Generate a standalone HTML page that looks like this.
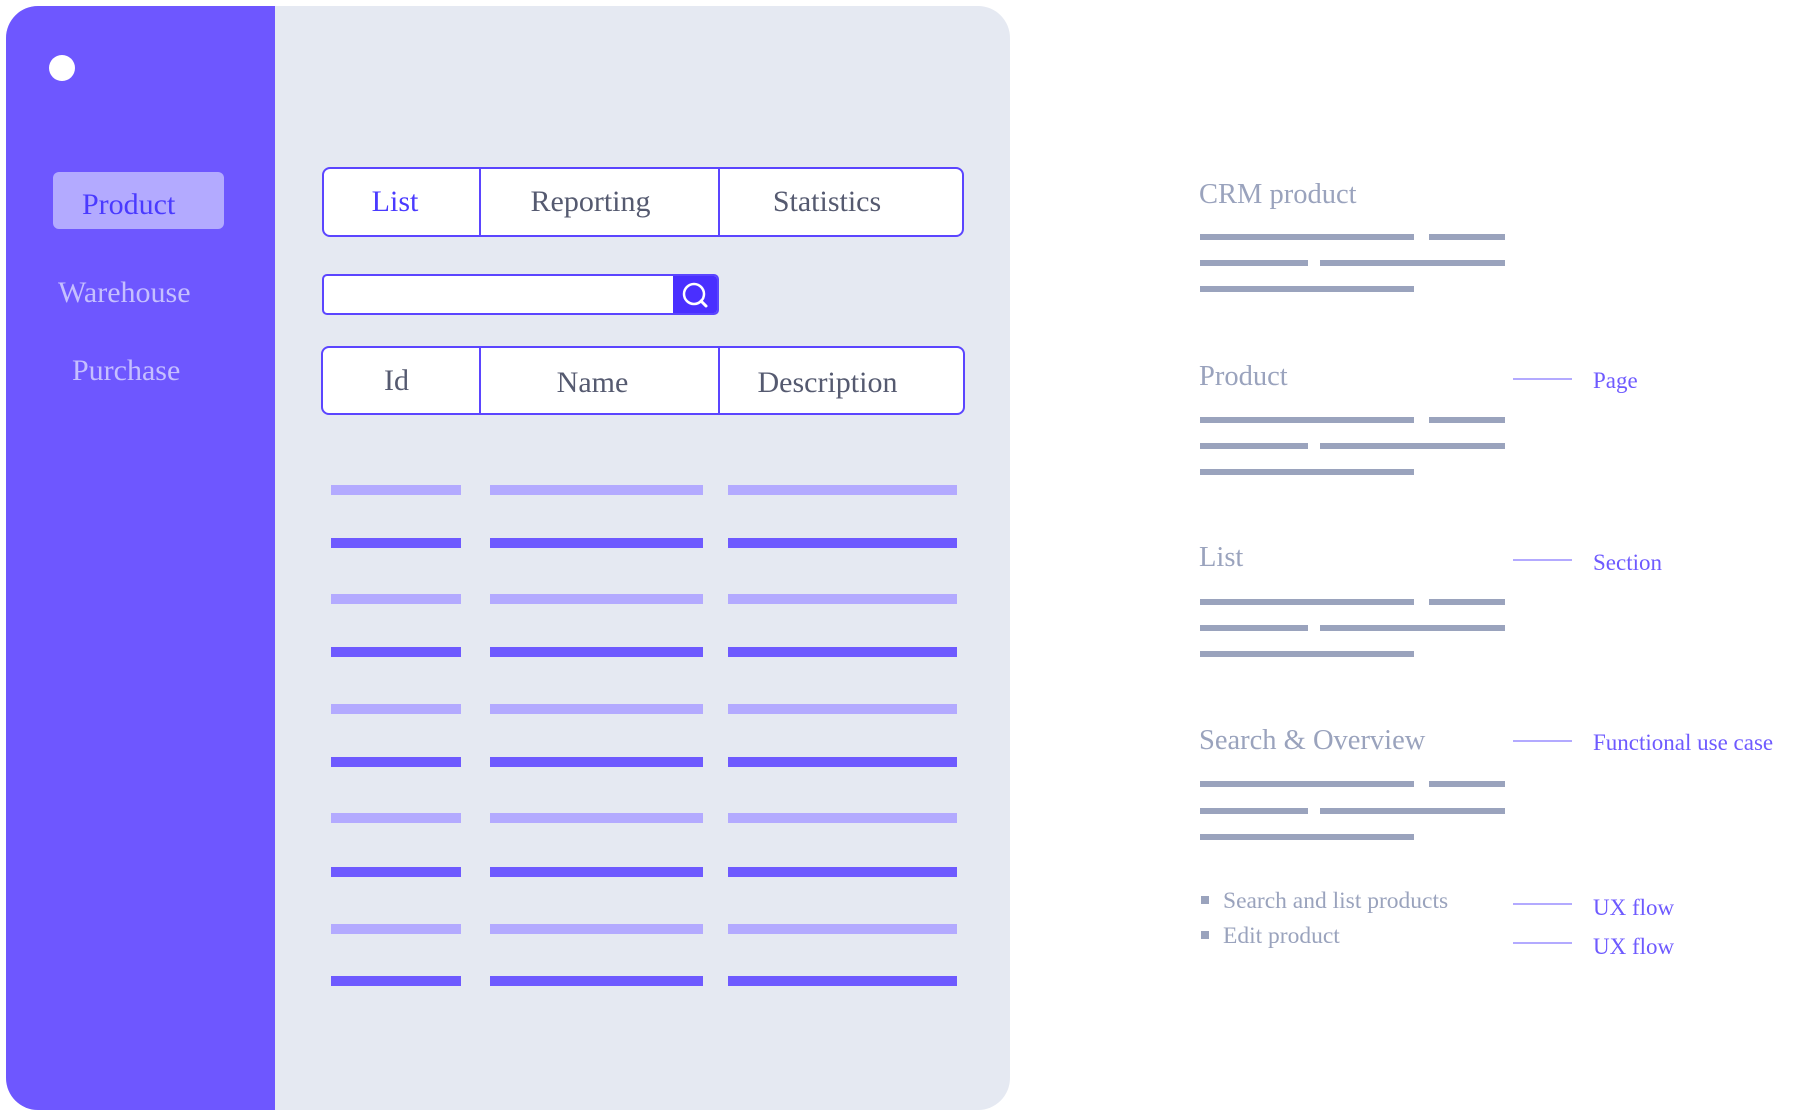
<!DOCTYPE html>
<html><head><meta charset="utf-8"><style>
*{margin:0;padding:0;box-sizing:border-box}
body{width:1814px;height:1115px;background:#fff;position:relative;overflow:hidden;font-family:"Liberation Serif",serif}
.a{position:absolute}
.card{left:6px;top:6px;width:1004px;height:1104px;background:#e5e9f2;border-radius:32px;overflow:hidden}
.side{left:0;top:0;width:269px;height:100%;background:#6e57ff}
.t{position:absolute;white-space:nowrap;line-height:1}
.box{background:#fff;border:2px solid #5b45ff;border-radius:8px}
.cell{position:absolute;top:0;height:100%;display:flex;align-items:center;justify-content:center;font-size:30px;color:#555a70}
.bar{position:absolute;height:10px}
.g{position:absolute;height:6px;background:#9aa3bd}
.h{font-size:28.5px;color:#9aa3bd}
.c{position:absolute;height:2px;width:59px;left:1513px;background:#b3aaff}
.l{font-size:23px;color:#6e5aff}
.bt{font-size:23.5px;color:#9aa3bd}
</style></head><body>
<div class="a card">
 <div class="a side">
  <div class="a" style="left:43px;top:49px;width:26px;height:26px;border-radius:50%;background:#fff"></div>
  <div class="a" style="left:47px;top:166px;width:171px;height:57px;border-radius:6px;background:#b3aaff"></div>
  <div class="t" style="left:76px;top:184px;font-size:30px;color:#4a3aff">Product</div>
  <div class="t" style="left:52px;top:272px;font-size:30px;color:#c5bfff">Warehouse</div>
  <div class="t" style="left:66px;top:350px;font-size:30px;color:#c5bfff">Purchase</div>
 </div>
</div>
<div class="a box" style="left:322px;top:167px;width:642px;height:70px">
 <div class="cell" style="left:0;width:156px;color:#4a3aff;transform:translateX(-7px)">List</div>
 <div class="a" style="left:155px;top:0;width:2px;height:100%;background:#5b45ff"></div>
 <div class="cell" style="left:157px;width:239px;transform:translateX(-10px)">Reporting</div>
 <div class="a" style="left:394px;top:0;width:2px;height:100%;background:#5b45ff"></div>
 <div class="cell" style="left:396px;width:242px;transform:translateX(-14px)">Statistics</div>
</div>
<div class="a box" style="left:322px;top:274px;width:397px;height:41px;overflow:hidden;border-radius:5px">
 <div class="a" style="right:0;top:0;width:44px;height:100%;background:#4a2fff"></div>
 <svg class="a" style="right:8px;top:5px" width="28" height="28" viewBox="0 0 28 28"><circle cx="13" cy="13" r="10" fill="none" stroke="#fff" stroke-width="2.5"/><path d="M20 20 L25 25" stroke="#fff" stroke-width="3" stroke-linecap="round"/></svg>
</div>
<div class="a box" style="left:321px;top:346px;width:644px;height:69px">
 <div class="cell" style="left:0;width:157px;transform:translateX(-5px)">Id</div>
 <div class="a" style="left:156px;top:0;width:2px;height:100%;background:#5b45ff"></div>
 <div class="cell" style="left:158px;width:239px;padding-top:4px;transform:translateX(-8px)">Name</div>
 <div class="a" style="left:395px;top:0;width:2px;height:100%;background:#5b45ff"></div>
 <div class="cell" style="left:397px;width:243px;padding-top:4px;transform:translateX(-14px)">Description</div>
</div>
<div>
<div class="bar" style="left:331px;top:485px;width:130px;background:#b3aaff"></div><div class="bar" style="left:490px;top:485px;width:213px;background:#b3aaff"></div><div class="bar" style="left:728px;top:485px;width:229px;background:#b3aaff"></div>
<div class="bar" style="left:331px;top:538px;width:130px;background:#6e5aff"></div><div class="bar" style="left:490px;top:538px;width:213px;background:#6e5aff"></div><div class="bar" style="left:728px;top:538px;width:229px;background:#6e5aff"></div>
<div class="bar" style="left:331px;top:594px;width:130px;background:#b3aaff"></div><div class="bar" style="left:490px;top:594px;width:213px;background:#b3aaff"></div><div class="bar" style="left:728px;top:594px;width:229px;background:#b3aaff"></div>
<div class="bar" style="left:331px;top:647px;width:130px;background:#6e5aff"></div><div class="bar" style="left:490px;top:647px;width:213px;background:#6e5aff"></div><div class="bar" style="left:728px;top:647px;width:229px;background:#6e5aff"></div>
<div class="bar" style="left:331px;top:704px;width:130px;background:#b3aaff"></div><div class="bar" style="left:490px;top:704px;width:213px;background:#b3aaff"></div><div class="bar" style="left:728px;top:704px;width:229px;background:#b3aaff"></div>
<div class="bar" style="left:331px;top:757px;width:130px;background:#6e5aff"></div><div class="bar" style="left:490px;top:757px;width:213px;background:#6e5aff"></div><div class="bar" style="left:728px;top:757px;width:229px;background:#6e5aff"></div>
<div class="bar" style="left:331px;top:813px;width:130px;background:#b3aaff"></div><div class="bar" style="left:490px;top:813px;width:213px;background:#b3aaff"></div><div class="bar" style="left:728px;top:813px;width:229px;background:#b3aaff"></div>
<div class="bar" style="left:331px;top:867px;width:130px;background:#6e5aff"></div><div class="bar" style="left:490px;top:867px;width:213px;background:#6e5aff"></div><div class="bar" style="left:728px;top:867px;width:229px;background:#6e5aff"></div>
<div class="bar" style="left:331px;top:924px;width:130px;background:#b3aaff"></div><div class="bar" style="left:490px;top:924px;width:213px;background:#b3aaff"></div><div class="bar" style="left:728px;top:924px;width:229px;background:#b3aaff"></div>
<div class="bar" style="left:331px;top:976px;width:130px;background:#6e5aff"></div><div class="bar" style="left:490px;top:976px;width:213px;background:#6e5aff"></div><div class="bar" style="left:728px;top:976px;width:229px;background:#6e5aff"></div>
</div>

<div class="t h" style="left:1199px;top:181px">CRM product</div>
<div class="g" style="left:1200px;top:234px;width:214px"></div><div class="g" style="left:1429px;top:234px;width:76px"></div>
<div class="g" style="left:1200px;top:260px;width:108px"></div><div class="g" style="left:1320px;top:260px;width:185px"></div>
<div class="g" style="left:1200px;top:286px;width:214px"></div>

<div class="t h" style="left:1199px;top:363px">Product</div>
<div class="g" style="left:1200px;top:417px;width:214px"></div><div class="g" style="left:1429px;top:417px;width:76px"></div>
<div class="g" style="left:1200px;top:443px;width:108px"></div><div class="g" style="left:1320px;top:443px;width:185px"></div>
<div class="g" style="left:1200px;top:469px;width:214px"></div>

<div class="t h" style="left:1199px;top:544px">List</div>
<div class="g" style="left:1200px;top:599px;width:214px"></div><div class="g" style="left:1429px;top:599px;width:76px"></div>
<div class="g" style="left:1200px;top:625px;width:108px"></div><div class="g" style="left:1320px;top:625px;width:185px"></div>
<div class="g" style="left:1200px;top:651px;width:214px"></div>

<div class="t h" style="left:1199px;top:727px">Search &amp; Overview</div>
<div class="g" style="left:1200px;top:781px;width:214px"></div><div class="g" style="left:1429px;top:781px;width:76px"></div>
<div class="g" style="left:1200px;top:808px;width:108px"></div><div class="g" style="left:1320px;top:808px;width:185px"></div>
<div class="g" style="left:1200px;top:834px;width:214px"></div>

<div class="a" style="left:1201px;top:896px;width:8px;height:8px;background:#9aa3bd"></div>
<div class="t bt" style="left:1223px;top:890px">Search and list products</div>
<div class="a" style="left:1201px;top:931px;width:8px;height:8px;background:#9aa3bd"></div>
<div class="t bt" style="left:1223px;top:925px">Edit product</div>

<div class="c" style="top:378px"></div><div class="t l" style="left:1593px;top:369px">Page</div>
<div class="c" style="top:559px"></div><div class="t l" style="left:1593px;top:551px">Section</div>
<div class="c" style="top:740px"></div><div class="t l" style="left:1593px;top:731px">Functional use case</div>
<div class="c" style="top:903px"></div><div class="t l" style="left:1593px;top:896px">UX flow</div>
<div class="c" style="top:942px"></div><div class="t l" style="left:1593px;top:935px">UX flow</div>
</body></html>
